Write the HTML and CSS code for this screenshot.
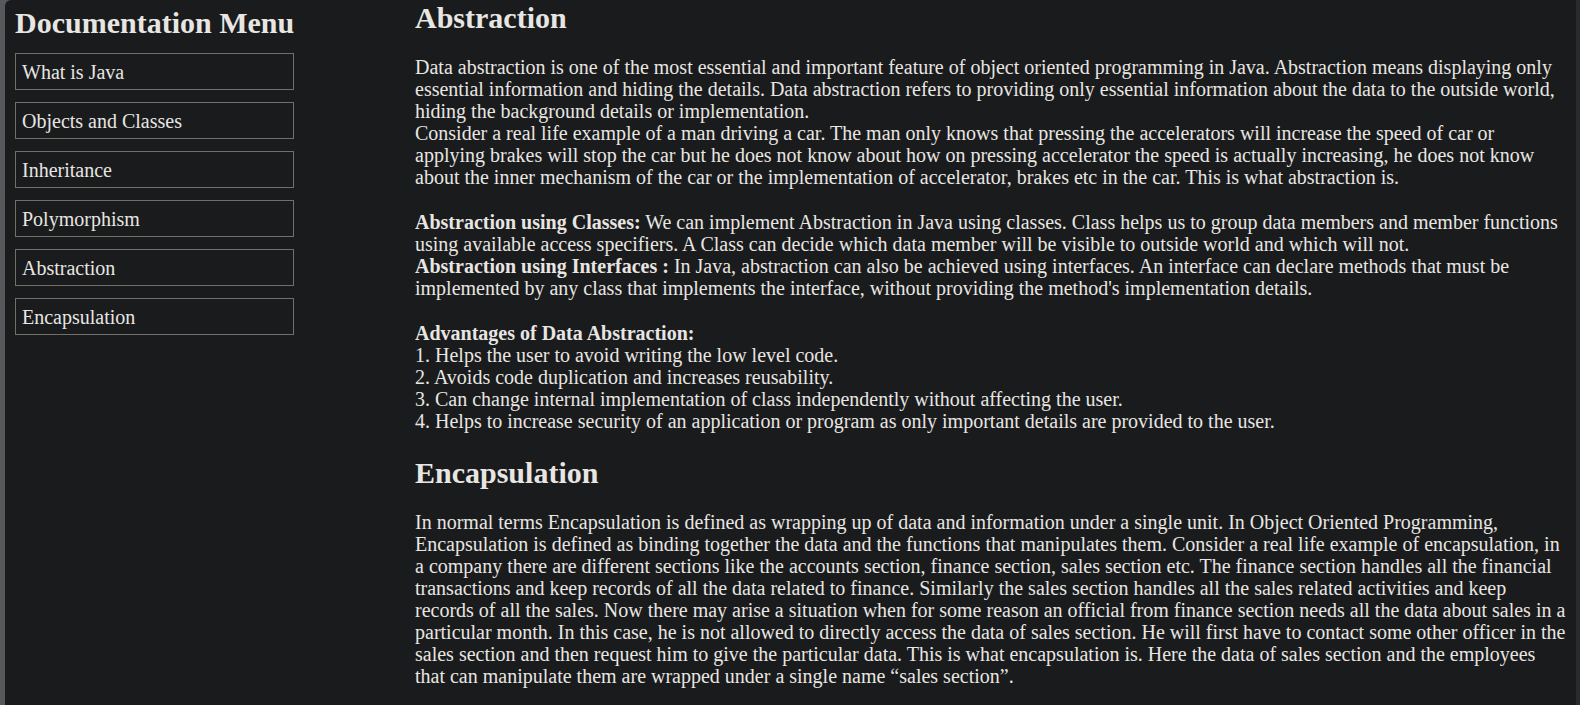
FILE: index.html
```html
<!DOCTYPE html>
<html lang="en">
<head>
<meta charset="utf-8">
<title>Java Documentation</title>
<link rel="stylesheet" href="styles.css">
</head>
<body>
<div class="page">
  <nav class="sidebar" aria-labelledby="menu-title">
    <h2 class="title" id="menu-title">Documentation Menu</h2>
    <ul class="menu">
      <li><a class="menu-link" href="#what-is-java">What is Java</a></li>
      <li><a class="menu-link" href="#objects">Objects and Classes</a></li>
      <li><a class="menu-link" href="#inheritance">Inheritance</a></li>
      <li><a class="menu-link" href="#polymorphism">Polymorphism</a></li>
      <li><a class="menu-link" href="#abstraction">Abstraction</a></li>
      <li><a class="menu-link" href="#encapsulation">Encapsulation</a></li>
    </ul>
  </nav>
  <main class="content">
    <section class="topic" id="abstraction">
      <h2 class="title">Abstraction</h2>
      <p class="text">Data abstraction is one of the most essential and important feature of object oriented programming in Java. Abstraction means displaying only essential information and hiding the details. Data abstraction refers to providing only essential information about the data to the outside world, hiding the background details or implementation.<br>
      Consider a real life example of a man driving a car. The man only knows that pressing the accelerators will increase the speed of car or applying brakes will stop the car but he does not know about how on pressing accelerator the speed is actually increasing, he does not know about the inner mechanism of the car or the implementation of accelerator, brakes etc in the car. This is what abstraction is.</p>
      <p class="text"><b>Abstraction using Classes:</b> We can implement Abstraction in Java using classes. Class helps us to group data members and member functions using available access specifiers. A Class can decide which data member will be visible to outside world and which will not.<br>
      <b>Abstraction using Interfaces :</b> In Java, abstraction can also be achieved using interfaces. An interface can declare methods that must be implemented by any class that implements the interface, without providing the method's implementation details.</p>
      <p class="text"><b>Advantages of Data Abstraction:</b><br>
      1. Helps the user to avoid writing the low level code.<br>
      2. Avoids code duplication and increases reusability.<br>
      3. Can change internal implementation of class independently without affecting the user.<br>
      4. Helps to increase security of an application or program as only important details are provided to the user.</p>
    </section>
    <section class="topic" id="encapsulation">
      <h2 class="title">Encapsulation</h2>
      <p class="text">In normal terms Encapsulation is defined as wrapping up of data and information under a single unit. In Object Oriented Programming, Encapsulation is defined as binding together the data and the functions that manipulates them. Consider a real life example of encapsulation, in a company there are different sections like the accounts section, finance section, sales section etc. The finance section handles all the financial transactions and keep records of all the data related to finance. Similarly the sales section handles all the sales related activities and keep records of all the sales. Now there may arise a situation when for some reason an official from finance section needs all the data about sales in a particular month. In this case, he is not allowed to directly access the data of sales section. He will first have to contact some other officer in the sales section and then request him to give the particular data. This is what encapsulation is. Here the data of sales section and the employees that can manipulate them are wrapped under a single name “sales section”.</p>
    </section>
  </main>
</div>
</body>
</html>
```
FILE: styles.css
```css
* { box-sizing: border-box; }

html { background: #56585c; }

body {
  margin: 0;
  padding-left: 5px;
  font: 20px/22px "Liberation Serif", "Times New Roman", serif;
  color: #e8e6e3;
}

.page {
  display: flex;
  min-height: 100vh;
  background: #1a1b1c;
  border-right: 4px solid #2a2b2c;
  border-top-left-radius: 6px;
}

.sidebar {
  flex: 0 0 410px;
  padding: 6px 0 0 10px;
}

.title {
  margin: 0;
  font-size: 30px;
  line-height: 34px;
}

.menu {
  display: flex;
  flex-direction: column;
  gap: 12px;
  width: 279px;
  margin: 13px 0 0;
  padding: 0;
  list-style: none;
}

.menu-link {
  display: block;
  padding: 7px 6px 6px;
  border: 1px solid #736f68;
  color: inherit;
  text-decoration: none;
}

.content {
  flex: 1;
  min-width: 0;
  padding: 1px 8px 0 0;
}

.topic + .topic { margin-top: 24px; }

.text { margin: 0; }

.title + .text { margin-top: 21px; }

.text + .text { margin-top: 23px; }
```
